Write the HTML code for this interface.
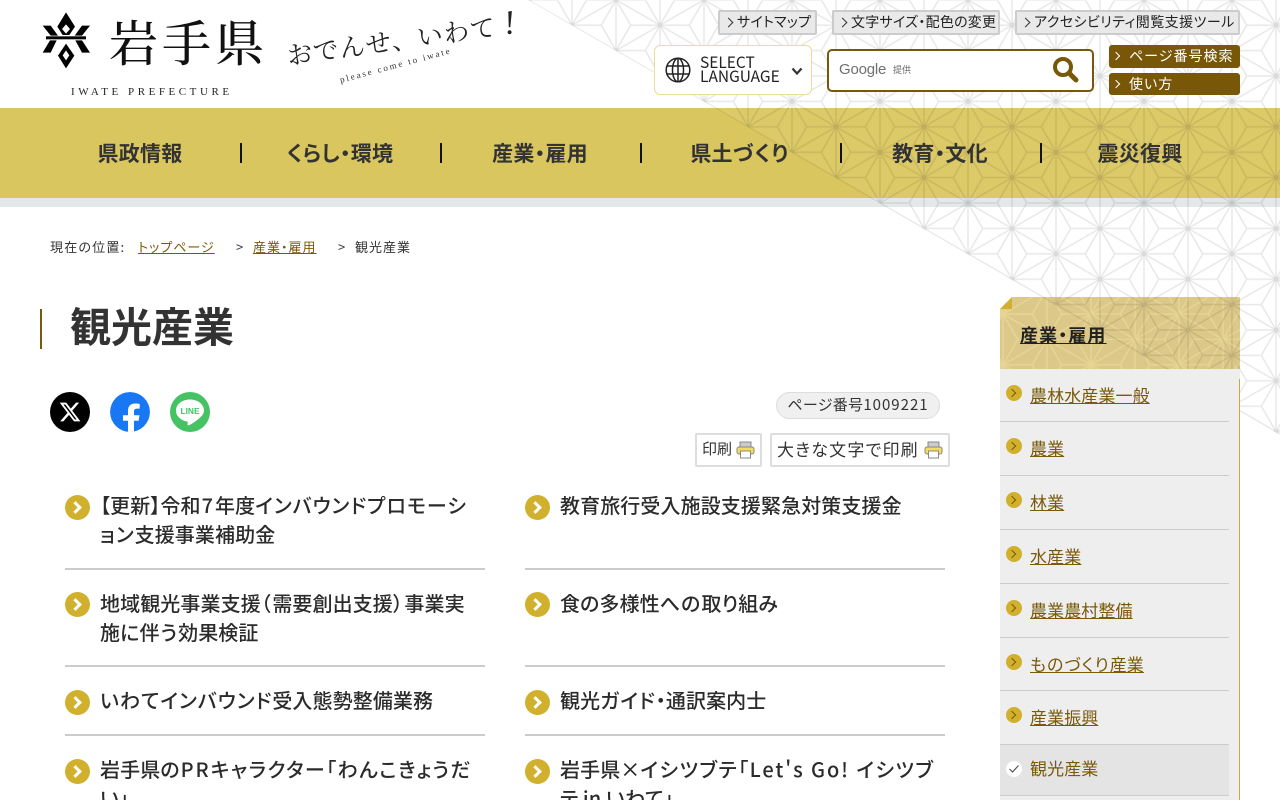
<!DOCTYPE html>
<html lang="ja"><head><meta charset="utf-8"><title>観光産業</title>
<style>
html,body{margin:0;padding:0;width:1280px;height:800px;overflow:hidden;background:#fff}
body{position:relative;font-family:"Noto Sans CJK JP","Liberation Sans",sans-serif;color:#333;font-feature-settings:"palt"}
.t{position:absolute;white-space:nowrap}
.a{position:absolute;box-sizing:border-box}
a{color:#7a5a0a}
.k{letter-spacing:1px}
.top{z-index:3;background:#e9e9e9;border:2px solid #ccc;border-radius:2px;height:25px;font-size:14px;line-height:21px;color:#222;white-space:nowrap;padding-left:17px;letter-spacing:.25px}
.chev:before{content:"";position:absolute;left:5px;top:7px;width:6px;height:6px;border-top:1.3px solid #333;border-right:1.3px solid #333;transform:rotate(45deg)}
.br{z-index:3;background:#785808;border-radius:3px;height:23px;color:#fff;font-size:14px;line-height:22px;padding-left:20px;letter-spacing:1px;white-space:nowrap}
.br:before{content:"";position:absolute;left:4px;top:8px;width:5px;height:5px;border-top:1.2px solid #fff;border-right:1.2px solid #fff;transform:rotate(45deg)}
.nav{z-index:3;font-size:21px;font-weight:700;letter-spacing:.25px;line-height:30px;top:138px;width:200px;text-align:center;color:#333}
.nav .k{letter-spacing:1.5px}
.sep{position:absolute;z-index:3;width:2px;height:20px;top:143px;background:#111}
.bu{position:absolute;z-index:3;width:25px;height:25px;border-radius:50%;background:#d0b02c}
.bu:after{content:"";position:absolute;left:6px;top:8px;width:6px;height:6px;border-top:3px solid #fff;border-right:3px solid #fff;transform:rotate(45deg)}
.li{z-index:3;font-size:20px;font-weight:500;letter-spacing:.1px;line-height:29px;color:#2b2b2b}
.hr{position:absolute;z-index:3;height:2px;background:#ccc;width:420px}
.sb{position:absolute;z-index:3;left:1006px;width:16px;height:16px;border-radius:50%;background:#d0b02c}
.sb:after{content:"";position:absolute;left:3px;top:5px;width:5px;height:5px;border-top:1.3px solid #7a5a0a;border-right:1.3px solid #7a5a0a;transform:rotate(45deg)}
.si{z-index:5;left:1030px;font-size:17px;letter-spacing:.1px;line-height:24px}
.sh{position:absolute;z-index:5;left:1000px;width:229px;height:1px;background:#ccc}
</style></head><body>
<svg width="0" height="0" style="position:absolute"><defs>
<pattern id="asa" patternUnits="userSpaceOnUse" width="88" height="50.8" y="-.2">
<g opacity=".09" fill="none" stroke="#000" stroke-width="1.5">
<path d="M0 0V50.8"/><path d="M44 0V50.8"/><path d="M88 0V50.8"/>
<path d="M0 0L44 25.4"/><path d="M88 0L44 25.4"/><path d="M0 50.8L44 25.4"/><path d="M88 50.8L44 25.4"/>
<path d="M14.67 25.4L0 0"/><path d="M14.67 25.4L0 50.8"/><path d="M14.67 25.4H44"/>
<path d="M73.33 25.4L88 0"/><path d="M73.33 25.4L88 50.8"/><path d="M73.33 25.4H44"/>
<path d="M29.33 0H0"/><path d="M29.33 0L44 25.4"/>
<path d="M29.33 50.8H0"/><path d="M29.33 50.8L44 25.4"/>
<path d="M58.67 0H88"/><path d="M58.67 0L44 25.4"/>
<path d="M58.67 50.8H88"/><path d="M58.67 50.8L44 25.4"/>
</g>
<g fill="#000" fill-opacity=".06"><circle cx="44" cy="25.4" r="2.5"/><circle cx="0" cy="0" r="2.5"/><circle cx="88" cy="0" r="2.5"/><circle cx="0" cy="50.8" r="2.5"/><circle cx="88" cy="50.8" r="2.5"/></g>
</pattern>
<pattern id="asal" patternUnits="userSpaceOnUse" width="88" height="50.8" x="3" y="17">
<g opacity=".3" fill="none" stroke="#fff2b0" stroke-width="1.5">
<path d="M0 0V50.8"/><path d="M44 0V50.8"/><path d="M88 0V50.8"/>
<path d="M0 0L44 25.4"/><path d="M88 0L44 25.4"/><path d="M0 50.8L44 25.4"/><path d="M88 50.8L44 25.4"/>
<path d="M14.67 25.4L0 0"/><path d="M14.67 25.4L0 50.8"/><path d="M14.67 25.4H44"/>
<path d="M73.33 25.4L88 0"/><path d="M73.33 25.4L88 50.8"/><path d="M73.33 25.4H44"/>
<path d="M29.33 0H0"/><path d="M29.33 0L44 25.4"/>
<path d="M29.33 50.8H0"/><path d="M29.33 50.8L44 25.4"/>
<path d="M58.67 0H88"/><path d="M58.67 0L44 25.4"/>
<path d="M58.67 50.8H88"/><path d="M58.67 50.8L44 25.4"/>
</g></pattern>
</defs></svg>

<!-- nav band -->
<div class="a" style="left:0;top:108px;width:1280px;height:90px;background:#dac65e"></div>
<div class="a" style="left:0;top:198px;width:1280px;height:9px;background:#e3e9e9"></div>
<svg class="a" style="left:0;top:0;z-index:1" width="1280" height="800"><polygon points="528,0 1280,435 1280,0" fill="url(#asa)"/><polygon points="715,108 872,198 1280,198 1280,108" fill="#fff" fill-opacity=".06"/></svg>

<!-- sidebar head -->
<div class="a" style="left:1000px;top:297px;width:240px;height:72px;background:#dcc888;z-index:0"></div>
<svg class="a" style="left:1000px;top:297px;z-index:0" width="240" height="72"><rect width="240" height="72" fill="url(#asal)"/><polygon points="0,12 12,0 0,0" fill="#fff"/><polygon points="0,12 12,0 12,12" fill="#d0b02c"/></svg>

<!-- logo -->
<svg class="a" style="left:30px;top:5px;z-index:3" width="100" height="70" viewBox="0 0 300 210">
<path d="M108 22L135 65 118 90H98L82 65Z"/><path d="M108 58L120 72 108 86 96 72Z" fill="#fff"/>
<rect x="48" y="94" width="120" height="9"/>
<path d="M38 62H62L84 92H62Z"/><path d="M180 62H156L134 92H156Z"/>
<path d="M60 106H80L62 143H38Z"/><path d="M156 106H136L156 143H180Z"/>
<path d="M108 116L133 152 108 190 84 152Z"/><path d="M108 136L118 151 108 166 98 151Z" fill="#fff"/>
</svg>
<div class="t" style="left:109px;top:8px;z-index:3;font-family:'Noto Serif CJK SC',serif;font-weight:500;font-size:49px;line-height:66px;letter-spacing:4px;color:#111;font-feature-settings:normal">岩手県</div>
<div class="t" style="left:71px;top:85px;z-index:3;font-family:'Liberation Serif',serif;font-size:11px;line-height:14px;letter-spacing:3.55px;color:#222">IWATE PREFECTURE</div>
<div class="t" style="left:287px;top:37px;z-index:3;font-family:'Noto Serif CJK SC',serif;font-size:25.500px;line-height:36px;color:#222;transform:rotate(-8deg);transform-origin:0 50%;font-feature-settings:normal;letter-spacing:1px">おでんせ、いわて<i style="font-size:34px;font-family:'Liberation Serif',serif;margin-left:8px">!</i></div>
<div class="t" style="left:340px;top:75px;z-index:3;font-family:'Liberation Serif',serif;font-size:9px;line-height:10px;letter-spacing:2px;color:#333;transform:rotate(-15deg);transform-origin:0 50%">please come to iwate</div>

<!-- top buttons -->
<div class="a top chev" style="left:718px;top:10px;width:99px">サイトマップ</div>
<div class="a top chev" style="left:832px;top:10px;width:168px">文字サイズ・配色の変更</div>
<div class="a top chev" style="left:1015px;top:10px;width:225px;letter-spacing:.45px">アクセシビリティ閲覧支援ツール</div>

<div class="a" style="left:654px;top:45px;width:158px;height:50px;background:#fff;border:1px solid #ecdc9a;border-radius:6px;z-index:3"></div>
<svg class="a" style="left:665px;top:57px;z-index:4" width="26" height="26" viewBox="0 0 26 26" fill="none" stroke="#222" stroke-width="1.5"><circle cx="13" cy="13" r="11.8"/><ellipse cx="13" cy="13" rx="5.5" ry="11.8"/><path d="M13 1V25M1.5 9H24.5M1.500 17H24.500"/></svg>
<div class="t" style="left:700px;top:55px;z-index:4;font-size:15.500px;line-height:14px;color:#222">SELECT<br>LANGUAGE</div>
<svg class="a" style="left:791px;top:67px;z-index:4" width="12" height="9" viewBox="0 0 12 9" fill="none" stroke="#333" stroke-width="2.2"><path d="M1.500 1.500L6 6.500 10.500 1.500"/></svg>

<div class="a" style="left:827px;top:49px;width:267px;height:43px;background:#fff;border:2px solid #785808;border-radius:5px;z-index:3"></div>
<div class="t" style="left:839px;top:61px;z-index:4;font-family:'Liberation Sans',sans-serif;font-size:15px;font-weight:400;line-height:18px;color:#6f6f6f;letter-spacing:-.2px">Google</div>
<div class="t" style="left:893px;top:63px;z-index:4;font-size:9px;line-height:13px;color:#666">提供</div>
<svg class="a" style="left:1052px;top:56px;z-index:4" width="27" height="27" viewBox="0 0 27 27" fill="none" stroke="#785808"><circle cx="11" cy="11" r="8" stroke-width="4"/><path d="M17 17L24 24" stroke-width="5" stroke-linecap="round"/></svg>

<div class="a br" style="left:1109px;top:45px;width:131px">ページ番号検索</div>
<div class="a br" style="left:1109px;top:73px;width:131px;height:22px">使い方</div>

<!-- nav -->
<div class="t nav" style="left:40px">県政情報</div>
<div class="t nav" style="left:240px">くらし・環境</div>
<div class="t nav" style="left:440px">産業・雇用</div>
<div class="t nav" style="left:640px">県土<span class="k">づくり</span></div>
<div class="t nav" style="left:840px">教育・文化</div>
<div class="t nav" style="left:1040px">震災復興</div>
<div class="sep" style="left:240px"></div><div class="sep" style="left:440px"></div><div class="sep" style="left:640px"></div><div class="sep" style="left:840px"></div><div class="sep" style="left:1040px"></div>

<!-- breadcrumb -->
<div class="t" style="left:50px;top:238px;z-index:3;font-size:13px;line-height:18px;letter-spacing:1.2px">現在の位置:</div>
<div class="t" style="left:138px;top:238px;z-index:3;font-size:13px;line-height:18px;letter-spacing:1px"><a href="#">トップページ</a></div>
<div class="t" style="left:236px;top:238px;z-index:3;font-size:13px;line-height:18px">&gt;</div>
<div class="t" style="left:253px;top:238px;z-index:3;font-size:13px;line-height:18px;letter-spacing:1px"><a href="#">産業・雇用</a></div>
<div class="t" style="left:338px;top:238px;z-index:3;font-size:13px;line-height:18px">&gt;</div>
<div class="t" style="left:355px;top:238px;z-index:3;font-size:13px;line-height:18px;letter-spacing:1px">観光産業</div>

<!-- h1 -->
<div class="a" style="left:40px;top:309px;width:2px;height:40px;background:#7a5a0a;z-index:3"></div>
<div class="t" style="left:70px;top:294px;z-index:3;font-size:41px;font-weight:700;line-height:60px;letter-spacing:0;color:#333">観光産業</div>

<!-- sns -->
<svg class="a" style="left:50px;top:392px;z-index:3" width="40" height="40" viewBox="0 0 40 40"><circle cx="20" cy="20" r="20" fill="#000"/><g transform="translate(8.500 8.500) scale(.96)"><path fill="#fff" fill-rule="evenodd" d="M18.244 2.25h3.308l-7.227 8.26 8.502 11.24H16.17l-5.214-6.817L4.99 21.75H1.68l7.73-8.835L1.254 2.25H8.08l4.713 6.231zm-1.161 17.52h1.833L7.084 4.126H5.117z"/></g></svg>
<svg class="a" style="left:110px;top:392px;z-index:3;clip-path:circle(20px at 20px 20px)" width="40" height="40" viewBox="0 0 40 40"><circle cx="20" cy="20" r="20" fill="#1877f2"/><g transform="translate(1 3)"><path fill="#fff" d="M23 40V25.8H27.6L28.5 20.2H23V16.6C23 15 23.7 13.6 26 13.6H28.7V8.9C28.7 8.9 26.3 8.5 24 8.5 19.7 8.5 17 11.1 17 15.8V20.2H12V25.8H17V40Z"/></g></svg>
<svg class="a" style="left:170px;top:392px;z-index:3" width="40" height="40" viewBox="0 0 40 40"><circle cx="20" cy="20" r="20" fill="#45c264"/><path fill="#fff" d="M20 7.500C12 7.500 6 12.400 6 18.600 6 24 10.600 28.400 17 29.500 18.200 29.800 17.600 31.400 17.500 32.600 17.400 33.600 18.400 33.600 19.600 33 22 31.800 28 27.800 31 24.600 33 22.600 34 20.700 34 18.600 34 12.400 28 7.500 20 7.500Z"/><text x="20" y="22" text-anchor="middle" font-family="Liberation Sans,sans-serif" font-weight="700" font-size="8.4" fill="#45c264">LINE</text></svg>

<!-- page no / print -->
<div class="t" style="left:776px;top:392px;width:164px;height:27px;box-sizing:border-box;background:#f0f0f0;border:1px solid #ddd;border-radius:14px;z-index:3;font-size:15px;line-height:23px;text-align:center;letter-spacing:.3px">ページ番号<span style="letter-spacing:1px">1009221</span></div>
<div class="a" style="left:695px;top:433px;width:67px;height:34px;border:2px solid #ddd;border-radius:2px;z-index:3"></div>
<div class="t" style="left:702px;top:438px;z-index:3;font-size:15px;line-height:22px">印刷</div>
<svg class="a" style="left:736px;top:441px;z-index:3" width="19" height="18" viewBox="0 0 19 18"><rect x="4" y="1" width="11" height="6" fill="#ccc" stroke="#888"/><rect x="1" y="6" width="17" height="7" rx="2" fill="#f3dc5e" stroke="#888"/><rect x="4.500" y="10" width="10" height="7" fill="#fff" stroke="#888"/></svg>
<div class="a" style="left:770px;top:433px;width:180px;height:34px;border:2px solid #ddd;border-radius:2px;z-index:3"></div>
<div class="t" style="left:777px;top:437px;z-index:3;font-size:17px;line-height:24px;letter-spacing:1.2px">大きな文字で印刷</div>
<svg class="a" style="left:924px;top:441px;z-index:3" width="19" height="18" viewBox="0 0 19 18"><rect x="4" y="1" width="11" height="6" fill="#ccc" stroke="#888"/><rect x="1" y="6" width="17" height="7" rx="2" fill="#f3dc5e" stroke="#888"/><rect x="4.500" y="10" width="10" height="7" fill="#fff" stroke="#888"/></svg>

<!-- list -->
<div class="bu" style="left:65px;top:495px"></div>
<div class="t li" style="left:100px;top:490px">【更新】令和<span style="letter-spacing:2px;margin-left:1px">7</span>年度<span class="k">インバウンドプロモーシ</span><br><span class="k">ョン</span>支援事業補助金</div>
<div class="hr" style="left:65px;top:568px"></div>
<div class="bu" style="left:525px;top:495px"></div>
<div class="t li" style="left:560px;top:490px">教育旅行受入施設支援緊急対策支援金</div>
<div class="hr" style="left:525px;top:568px"></div>

<div class="bu" style="left:65px;top:592px"></div>
<div class="t li" style="left:100px;top:588px">地域観光事業支援<span style="letter-spacing:1.500px">（</span>需要創出支援<span style="letter-spacing:1.500px">）</span>事業実<br>施に<span class="k">伴う</span>効果検証</div>
<div class="hr" style="left:65px;top:665px"></div>
<div class="bu" style="left:525px;top:592px"></div>
<div class="t li" style="left:560px;top:588px">食の多様性<span class="k">への</span>取り組み</div>
<div class="hr" style="left:525px;top:665px"></div>

<div class="bu" style="left:65px;top:690px"></div>
<div class="t li" style="left:100px;top:685px"><span class="k">いわてインバウンド</span>受入態勢整備業務</div>
<div class="hr" style="left:65px;top:734px"></div>
<div class="bu" style="left:525px;top:690px"></div>
<div class="t li" style="left:560px;top:685px">観光<span class="k">ガイド</span>・通訳案内士</div>
<div class="hr" style="left:525px;top:734px"></div>

<div class="bu" style="left:65px;top:759px"></div>
<div class="t li" style="left:100px;top:754px">岩手県<span class="k">の</span><span style="letter-spacing:2px">PR</span><span style="letter-spacing:1.450px">キャラクター「わんこきょうだ</span><br>い」</div>
<div class="bu" style="left:525px;top:759px"></div>
<div class="t li" style="left:560px;top:754px">岩手県×<span style="letter-spacing:1.500px">イシツブテ「</span><span style="letter-spacing:1.900px">Let's Go! </span><span style="letter-spacing:1.500px">イシツブ</span><br>テ in いわて」</div>

<!-- sidebar -->
<div class="a" style="left:1000px;top:369px;width:240px;height:431px;background:#eee;z-index:4"></div>
<div class="a" style="left:1239px;top:379px;width:1px;height:421px;background:#c9a93a;z-index:5"></div>
<div class="t" style="left:1020px;top:322px;z-index:5;font-size:18px;font-weight:700;line-height:26px;letter-spacing:1.100px;color:#222;text-decoration:underline">産業・雇用</div>

<div class="sb" style="left:1006px;top:385px;z-index:5"></div><div class="t si" style="top:383px"><a href="#">農林水産業一般</a></div><div class="sh" style="top:421px"></div>
<div class="sb" style="top:438px;z-index:5"></div><div class="t si" style="top:436px"><a href="#">農業</a></div><div class="sh" style="top:475px"></div>
<div class="sb" style="top:492px;z-index:5"></div><div class="t si" style="top:490px"><a href="#">林業</a></div><div class="sh" style="top:529px"></div>
<div class="sb" style="top:546px;z-index:5"></div><div class="t si" style="top:544px"><a href="#">水産業</a></div><div class="sh" style="top:583px"></div>
<div class="sb" style="top:600px;z-index:5"></div><div class="t si" style="top:598px"><a href="#">農業農村整備</a></div><div class="sh" style="top:637px"></div>
<div class="sb" style="top:654px;z-index:5"></div><div class="t si" style="top:652px"><a href="#"><span class="k">ものづくり</span>産業</a></div><div class="sh" style="top:690px"></div>
<div class="sb" style="top:707px;z-index:5"></div><div class="t si" style="top:705px"><a href="#">産業振興</a></div><div class="sh" style="top:744px"></div>
<div class="a" style="left:1000px;top:745px;width:229px;height:50px;background:#e4e4e4;z-index:5"></div>
<svg class="a" style="left:1006px;top:761px;z-index:6" width="16" height="16" viewBox="0 0 16 16"><circle cx="8" cy="8" r="8" fill="#fff"/><path d="M3.500 8L6.500 11 12.500 4.500" fill="none" stroke="#555" stroke-width="1.2"/></svg>
<div class="t si" style="top:756px;z-index:6;color:#7a5a0a">観光産業</div>
<div class="sh" style="top:795px"></div>
</body></html>
